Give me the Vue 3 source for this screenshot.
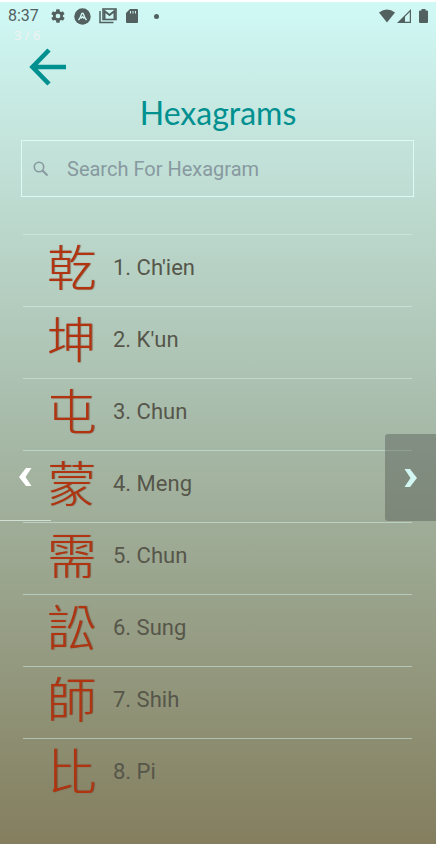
<script setup>
import { ref } from 'vue'

const query = ref('')
const hexagrams = [
  { glyph: '乾', name: "Ch'ien" },
  { glyph: '坤', name: "K'un" },
  { glyph: '屯', name: 'Chun' },
  { glyph: '蒙', name: 'Meng' },
  { glyph: '需', name: 'Chun' },
  { glyph: '訟', name: 'Sung' },
  { glyph: '師', name: 'Shih' },
  { glyph: '比', name: 'Pi' },
]
</script>

<template>
  <main class="screen">
    <div class="status">
      <span class="clock">8:37</span>
      <svg class="cog" viewBox="0 0 24 24" width="16" height="16"><path d="M19.4 13c.1-.7.1-1.300 0-2l2.100-1.600c.2-.2.2-.4.1-.6l-2-3.500c-.1-.2-.4-.3-.6-.2l-2.500 1c-.5-.4-1.100-.7-1.700-1l-.4-2.600c0-.3-.2-.5-.5-.5h-4c-.3 0-.5.2-.5.400L9 5.100c-.6.3-1.200.6-1.700 1l-2.500-1c-.2-.1-.5 0-.6.2l-2 3.500c-.1.200 0 .5.100.6L4.500 11c-.1.700-.1 1.300 0 2l-2.200 1.600c-.2.200-.2.400-.1.600l2 3.500c.1.200.4.300.6.200l2.500-1c.5.400 1.100.7 1.700 1l.4 2.600c0 .3.300.5.600.5h4c.2 0 .5-.2.500-.5l.4-2.600c.6-.3 1.200-.6 1.700-1l2.500 1c.2.100.5 0 .6-.2l2-3.500c.1-.2.100-.5-.1-.6zM12 15.500a3.500 3.500 0 1 1 0-7 3.500 3.500 0 0 1 0 7z" fill="currentColor" fill-rule="evenodd" /></svg>
      <svg viewBox="0 0 18 18" width="17" height="17"><circle cx="9" cy="9" r="8.700" fill="currentColor" /><path d="M4.800 12.800Q7 10 8 6.500 9 4.400 10 6.500 11 10 13.200 12.800M7.200 11 9 9.200l1.800 1.800" fill="none" stroke="#d0f5f2" stroke-width="1.500" /></svg>
      <svg viewBox="0 0 18 16" width="18" height="16"><path d="M1 3v11.500h13.500" fill="none" stroke="currentColor" stroke-width="1.500" /><rect x="4" y="1" width="13" height="10.500" fill="none" stroke="currentColor" stroke-width="1.600" /><path d="M5.500 11V3l5 4 5-4v8" fill="none" stroke="currentColor" stroke-width="2" /></svg>
      <svg class="card" viewBox="0 0 12 14" width="12" height="14"><path d="M4 0h7q1 0 1 1v12q0 1-1 1H1q-1 0-1-1V4z" fill="currentColor" /><path d="M4.500 2v2.500M7 2v2.500M9.500 2v2.500" stroke="#d0f5f2" stroke-width="1" /></svg>
      <span class="dot"></span>
      <span class="signals">
        <svg viewBox="0 0 16 14" width="16" height="14"><path d="M0 3.500Q8-2.500 16 3.500L8 13.500z" fill="currentColor" /></svg>
        <svg viewBox="0 0 14 14" width="14" height="14"><path d="M0 14 14 0v14zM8 12.800h4.800V3L8 7.800z" fill="currentColor" fill-rule="evenodd" /></svg>
        <svg class="battery" viewBox="0 0 9 14" width="9" height="14"><path d="M2.500 0h4v1.500H8q1 0 1 1V13q0 1-1 1H1q-1 0-1-1V2.500q0-1 1-1h1.500z" fill="currentColor" /></svg>
      </span>
      <span class="counter">3 / 6</span>
    </div>

    <button class="back" aria-label="Back">
      <svg viewBox="0 0 38 38" width="38" height="38"><path d="M37 19H4M20 2 3.500 19 20 36" fill="none" stroke="currentColor" stroke-width="4.600" /></svg>
    </button>

    <h1>Hexagrams</h1>

    <label class="search">
      <svg viewBox="0 0 16 16" width="16" height="16"><circle cx="6" cy="6" r="4.700" fill="none" stroke="currentColor" stroke-width="1.600" /><path d="m9.500 9.500 5 5" stroke="currentColor" stroke-width="2" /></svg>
      <input v-model="query" type="text" placeholder="Search For Hexagram" aria-label="Search For Hexagram" />
    </label>

    <ul class="list">
      <li v-for="(item, i) in hexagrams" :key="item.glyph">
        <a href="#">
          <span class="glyph">{{ item.glyph }}</span>
          <span>{{ i + 1 }}. {{ item.name }}</span>
        </a>
      </li>
    </ul>

    <button class="nav prev" aria-label="Previous">
      <svg viewBox="0 0 13 18" width="13" height="18"><path d="M7 0h5.500L6.500 9l6 9H7L0 9z" fill="currentColor" /></svg>
    </button>
    <button class="nav next" aria-label="Next">
      <svg viewBox="0 0 13 18" width="13" height="18"><path d="M6 0H.5l6 9-6 9H6l7-9z" fill="currentColor" /></svg>
    </button>
  </main>
</template>

<style>
body {
  background: #fff;
}
</style>

<style scoped>
.screen {
  position: relative;
  box-sizing: border-box;
  min-height: calc(100vh - 2px);
  margin: 2px 1px 0 0;
  padding-bottom: 32px;
  overflow: hidden;
  font-family: Roboto, "Liberation Sans", sans-serif;
  background: linear-gradient(#d0f9f6 0%, #c4e4dc 16%, #bad6ca 28%, #a5b7a5 53%, #949a80 78%, #847e5e 100%);
}
button {
  padding: 0;
  border: 0;
  background: none;
  cursor: pointer;
}
svg {
  display: block;
  flex: none;
}
.status {
  position: relative;
  display: flex;
  align-items: center;
  gap: 8px;
  height: 28px;
  padding: 0 8px;
  color: #52615f;
}
.clock {
  font-size: 16px;
  line-height: 28px;
}
.cog {
  margin-left: 3px;
}
.card {
  margin-left: 1px;
}
.dot {
  width: 5px;
  height: 5px;
  margin-left: 8px;
  border-radius: 50%;
  background: currentColor;
}
.signals {
  display: flex;
  gap: 2px;
  margin-left: auto;
}
.battery {
  margin-left: 6px;
}
.counter {
  position: absolute;
  top: 25px;
  left: 14px;
  color: #f2f2f2;
  font: 500 13px/16px "Open Sans", sans-serif;
}
.back {
  display: block;
  margin: 18px 0 0 29px;
  color: #009090;
}
h1 {
  margin: 7px 0 0;
  color: #009090;
  font: 400 32px/40px Lato, sans-serif;
  text-align: center;
}
.search {
  display: flex;
  align-items: center;
  gap: 18px;
  box-sizing: border-box;
  height: 57px;
  margin: 7px 22px 0 21px;
  padding: 0 11px;
  border: 1px solid #dcfaf6;
  color: #8899a0;
}
.search input {
  flex: 1;
  min-width: 0;
  padding: 0;
  border: 0;
  outline: 0;
  background: none;
  color: #52534a;
  font: 20px/28px Roboto, sans-serif;
}
.search input::placeholder {
  color: #8899a0;
  opacity: 1;
}
.list {
  margin: 37px 24px 0 23px;
  padding: 0;
  list-style: none;
}
.list li {
  border-top: 1px solid rgba(214, 244, 238, 0.5);
}
.list a {
  display: flex;
  align-items: center;
  gap: 14px;
  height: 65px;
  padding: 0 0 6px 24px;
  color: #56564a;
  font-size: 22px;
  line-height: 28px;
  text-decoration: none;
}
.glyph {
  width: 52px;
  padding-bottom: 6px;
  color: #b03410;
  font: 300 49px/58px "Noto Sans CJK TC", sans-serif;
  text-shadow: 1px 0 1px rgba(110, 36, 16, 0.6);
}
.nav {
  position: absolute;
  top: 432px;
  display: flex;
  align-items: center;
  justify-content: center;
  box-sizing: border-box;
  width: 51px;
  height: 87px;
}
.prev {
  left: 0;
  border-bottom: 1px solid #d0dfd3;
  color: #fff;
}
.next {
  right: 0;
  border-radius: 3px 0 0 3px;
  background: rgba(74, 80, 74, 0.4);
  color: #d2f6f2;
}
</style>
